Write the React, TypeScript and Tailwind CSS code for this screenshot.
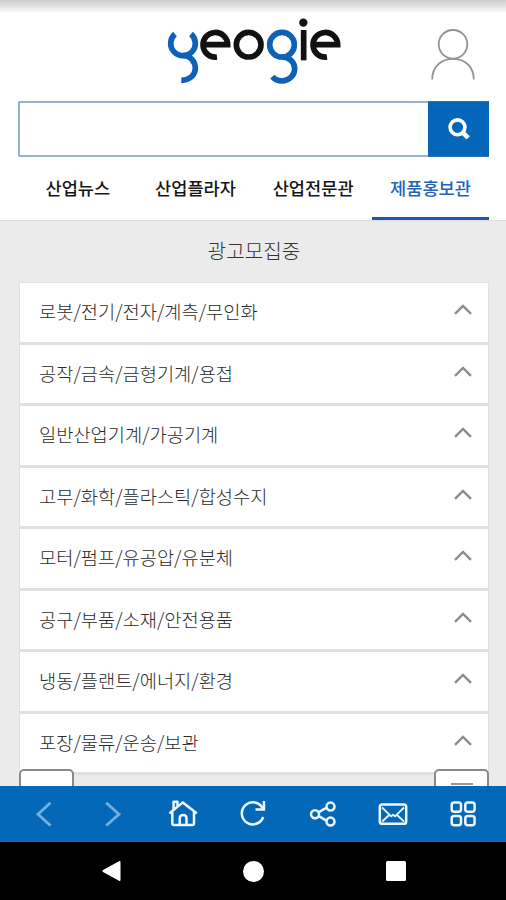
import React from 'react';

const tabs = ['산업뉴스', '산업플라자', '산업전문관', '제품홍보관'];

const categories = [
  '로봇/전기/전자/계측/무인화',
  '공작/금속/금형기계/용접',
  '일반산업기계/가공기계',
  '고무/화학/플라스틱/합성수지',
  '모터/펌프/유공압/유분체',
  '공구/부품/소재/안전용품',
  '냉동/플랜트/에너지/환경',
  '포장/물류/운송/보관',
];

function Logo() {
  return (
    <svg className="h-[70px] w-[180px]" viewBox="0 0 540 210" fill="none" strokeWidth="17" role="img" aria-label="yeogie">
      <g stroke="#0d62b8">
        <path d="M36 57A37 37 0 1 0 84 57" />
        <path d="M60 121C81 121 97 139 97 160S79 196 55 196" />
        <circle cx="357" cy="89" r="37" />
        <path d="M357 126C379 126 395 141 395 161S378 198 357 198Q339 198 328 185" />
      </g>
      <g stroke="#111">
        <path d="M118 89H194A37 37 0 1 0 162 126" />
        <circle cx="257" cy="89" r="37" />
        <path d="M422 45V136" />
        <path d="M449 89H524A37 37 0 1 0 492 126" />
      </g>
      <circle cx="421" cy="23" r="12.5" fill="#111" />
    </svg>
  );
}

function Person() {
  return (
    <svg className="h-[52px] w-[46px]" viewBox="0 0 46 52" fill="none" stroke="#929292" strokeWidth="1.8">
      <circle cx="23" cy="15.3" r="14.3" />
      <path d="M2.2 50.5C2.2 38 11 29.8 23 29.8S43.8 38 43.8 50.5" />
    </svg>
  );
}

function Search() {
  return (
    <svg className="size-[24px]" viewBox="0 0 24 24" fill="none" stroke="#fff">
      <circle cx="10.5" cy="10.3" r="7.4" strokeWidth="3.6" />
      <path d="M15.5 15.3L21.2 20.900" strokeWidth="4.6" />
    </svg>
  );
}

const barIcons: { name: string; art: React.ReactNode }[] = [
  { name: 'back', art: <path d="M23.5 4.8L11 16.2L23.5 27.5" stroke="#75afdb" strokeWidth="2.8" /> },
  { name: 'forward', art: <path d="M9.2 4.8L22 16.2L9.2 27.5" stroke="#75afdb" strokeWidth="2.8" /> },
  {
    name: 'home',
    art: (
      <g strokeLinejoin="round">
        <path d="M3.2 14.8L15.8 4.4L29 14.8" strokeLinecap="round" />
        <path d="M5.3 14V25.2Q5.3 27 7 27H25.3Q27 27 27 25.2V14" />
        <path d="M6.6 11.5V3.7H10.5V8" />
        <path d="M12.7 27V20.4Q12.7 17 16.1 17T19.5 20.4V27" />
      </g>
    ),
  },
  {
    name: 'reload',
    art: (
      <g>
        <path d="M25.7 10.5A11 11 0 1 0 26.2 19" />
        <path d="M26.900 3V11.5H18.5" />
      </g>
    ),
  },
  {
    name: 'share',
    art: (
      <g>
        <path d="M11.8 14.2L19.8 9.5M11.8 18.2L19.8 22.8" />
        <circle cx="8" cy="16.2" r="4" />
        <circle cx="23.5" cy="8.6" r="4" />
        <circle cx="23.5" cy="23.6" r="4" />
      </g>
    ),
  },
  {
    name: 'mail',
    art: (
      <g strokeLinejoin="round">
        <rect x="2.8" y="6.6" width="26.4" height="19.2" rx="2.4" />
        <path d="M5 9.5L14.2 18.4L16.1 16.6L18 18.4L27 9.5M5.2 23.5L12.2 17M20 17L27 23.5" strokeWidth="1.8" />
      </g>
    ),
  },
  {
    name: 'grid',
    art: (
      <g>
        <rect x="4.7" y="4.5" width="9.3" height="9.3" rx="2.5" />
        <rect x="18.3" y="4.5" width="9.3" height="9.3" rx="2.5" />
        <rect x="4.7" y="18" width="9.3" height="9.3" rx="2.5" />
        <rect x="18.3" y="18" width="9.3" height="9.3" rx="2.5" />
      </g>
    ),
  },
];

export default function App() {
  return (
    <div className="relative flex h-[900px] w-[506px] flex-col overflow-hidden bg-[#ebebeb] font-['Noto_Sans_CJK_KR',sans-serif]">
      <header className="flex h-[221px] shrink-0 flex-col border-b border-[#dedede] bg-white">
        <div className="h-[12px] shrink-0 bg-linear-to-b from-[#cdcdcd] to-[#f7f7f7]" />
        <div className="grid h-[89px] shrink-0 grid-cols-[1fr_180px_1fr]">
          <span />
          <div className="pt-[3px]"><Logo /></div>
          <div className="flex justify-end pt-[17px] pr-[30px]"><Person /></div>
        </div>
        <div className="mr-[17px] ml-[18px] flex h-[56px] shrink-0">
          <div className="flex-1 rounded-l-[2px] border-2 border-r-0 border-[#94b1d9]" />
          <button className="flex w-[61px] items-center justify-center border-y border-[#2f72b8] bg-[#0466b9]"><Search /></button>
        </div>
        <nav className="mr-[17px] ml-[19px] grid flex-1 grid-cols-[repeat(3,1fr)_117px]">
          {tabs.map((tab, i) => (
            <a
              key={tab}
              className={
                i === 3
                  ? 'flex items-center justify-center border-b-[3px] border-[#1f58b0] pt-[2px] text-[17.6px] font-medium text-[#2563b8]'
                  : 'flex items-center justify-center border-b-[3px] border-transparent pt-[2px] text-[17.6px] font-medium text-[#161616]'
              }
            >
              {tab}
            </a>
          ))}
        </nav>
      </header>

      <main className="flex h-[565px] shrink-0 flex-col overflow-hidden pr-[17px] pl-[19px]">
        <h1 className="flex h-[61px] shrink-0 items-center justify-center text-[20.2px] font-light text-[#333]">광고모집중</h1>
        <ul className="border border-b-0 border-[#e1e1e1]">
          {categories.map((name) => (
            <li key={name} className="flex h-[61.5px] items-center justify-between border-b-[3px] border-[#e0e0e0] bg-white pr-[16px] pl-[19px]">
              <span className="mb-[2px] text-[18.7px] font-light text-[#2b2b2b]">{name}</span>
              <svg className="mb-[4px] size-[18px]" viewBox="0 0 18 18" fill="none" stroke="#8c8c8c" strokeWidth="2.4">
                <path d="M1 12.800L9 5L17 12.800" />
              </svg>
            </li>
          ))}
        </ul>
      </main>

      <div className="absolute top-[769px] left-[19px] h-[30px] w-[55px] rounded-[5px] border-2 border-[#8a8a8a] bg-white" />
      <div className="absolute top-[769px] left-[434px] flex h-[30px] w-[55px] justify-center rounded-[5px] border-2 border-[#8a8a8a] bg-white pt-[12px]">
        <div className="h-[2px] w-[22px] bg-[#999]" />
      </div>

      <nav className="relative grid h-[56px] shrink-0 grid-cols-7 items-center bg-[#0468b9] px-[8px]">
        {barIcons.map(({ name, art }) => (
          <button key={name} aria-label={name} className="flex justify-center">
            <svg className="size-[32px]" viewBox="0 0 32 32" fill="none" stroke="#edf7ff" strokeWidth="2.5">{art}</svg>
          </button>
        ))}
      </nav>

      <footer className="flex h-[58px] shrink-0 items-center justify-between bg-black pr-[100px] pl-[99px]">
        <svg className="size-[22px]" viewBox="0 0 22 22" fill="#fff"><path d="M21.5 2V20Q21.5 21.5 20 20.8L4 12Q2.500 11 4 10L20 1.200Q21.500 .5 21.500 2Z" /></svg>
        <div className="size-[21px] rounded-full bg-white" />
        <div className="size-[20px] rounded-[1.500px] bg-white" />
      </footer>
    </div>
  );
}
